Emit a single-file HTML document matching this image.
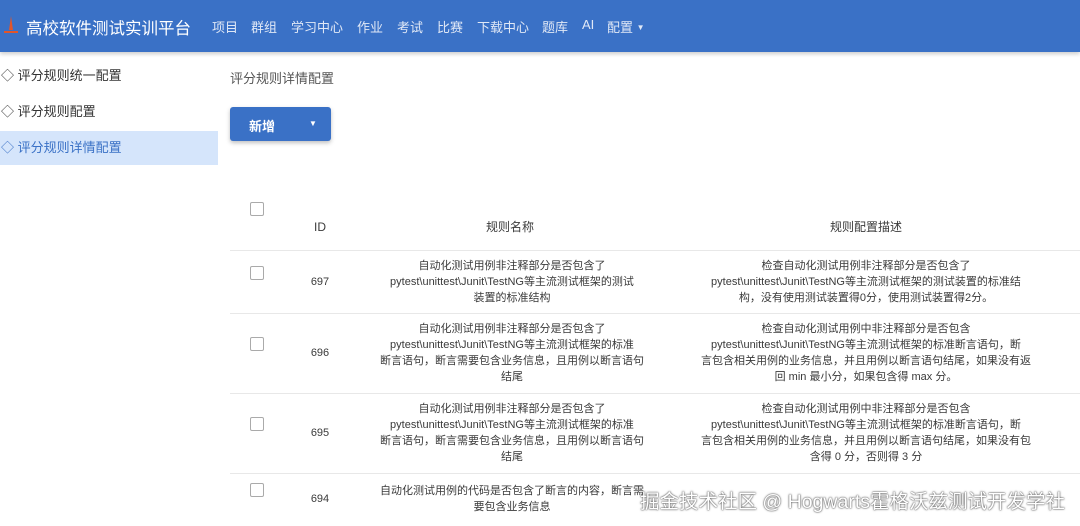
<!DOCTYPE html>
<html><head><meta charset="utf-8"><style>
*{margin:0;padding:0;box-sizing:border-box}
body{width:1080px;height:526px;overflow:hidden;background:#fff;font-family:"Liberation Sans","Noto Sans CJK SC",sans-serif;color:#333;position:relative}
.hd{position:absolute;left:0;top:0;width:1080px;height:52px;background:#3a71c6;box-shadow:0 2px 4px rgba(0,0,0,.2)}
.logo{position:absolute;left:26px;top:15px;font-size:16.5px;color:#fff}
.nav{position:absolute;left:212px;top:17px;font-size:13px;color:#e0e8f6;white-space:nowrap}
.nav span{position:absolute;top:0}
.side{position:absolute;left:0;font-size:13px;color:#333;height:34px;line-height:34px;width:218px;padding-left:1px}
.act{background:#d5e5fb;color:#3a71c6}
.a{position:absolute}
.btn{left:230px;top:107px;width:101px;height:34px;background:#3a71c6;border-radius:3px;box-shadow:0 2px 4px rgba(0,0,0,.25);color:#fff;font-size:13px;font-weight:bold}
.cb{position:absolute;left:250px;width:14px;height:14px;border:1px solid #aaa;border-radius:2px;background:#fff}
.c{position:absolute;font-size:11px;line-height:16px;text-align:center;color:#3a3a3a}
.line{position:absolute;left:230px;width:850px;height:1px;background:#e8e8e8}
.wm{position:absolute;left:640px;top:485px;font-size:19.5px;color:#fff;text-shadow:0 0 2px #555,0 0 1px #333;white-space:nowrap}
</style></head><body>
<div class="hd">
<svg class="a" style="left:3px;top:15px" width="16" height="20"><path d="M8 1 L10 15 L6 15 Z" fill="#e0552b"/><rect x="1" y="16" width="14" height="2" fill="#e0552b"/></svg>
<div class="logo">高校软件测试实训平台</div>
<div class="nav"><span style="left:0">项目</span><span style="left:39px">群组</span><span style="left:79px">学习中心</span><span style="left:145px">作业</span><span style="left:185px">考试</span><span style="left:225px">比赛</span><span style="left:265px">下载中心</span><span style="left:330px">题库</span><span style="left:370px">AI</span><span style="left:395px">配置 <span style="position:static;font-size:8px;vertical-align:2px">▼</span></span></div>
</div>
<div class="side" style="top:59px">◇ 评分规则统一配置</div>
<div class="side" style="top:95px">◇ 评分规则配置</div>
<div class="side act" style="top:131px">◇ 评分规则详情配置</div>
<div class="a" style="left:230px;top:68px;font-size:13px;color:#555">评分规则详情配置</div>
<div class="a btn"><span class="a" style="left:19px;top:9px">新增</span><span class="a" style="left:79px;top:12px;font-size:8px">▼</span></div>
<div class="cb" style="top:202px"></div>
<div class="c" style="left:300px;top:219px;width:40px;font-size:12px">ID</div>
<div class="c" style="left:410px;top:219px;width:200px;font-size:12px">规则名称</div>
<div class="c" style="left:766px;top:219px;width:200px;font-size:12px">规则配置描述</div>
<div class="line" style="top:250px"></div>
<div class="cb" style="top:266px"></div>
<div class="c" style="left:300px;top:274px;width:40px">697</div>
<div class="c" style="left:362px;top:258px;width:300px">自动化测试用例非注释部分是否包含了<br>pytest\unittest\Junit\TestNG等主流测试框架的测试<br>装置的标准结构</div>
<div class="c" style="left:676px;top:258px;width:380px">检查自动化测试用例非注释部分是否包含了<br>pytest\unittest\Junit\TestNG等主流测试框架的测试装置的标准结<br>构，没有使用测试装置得0分，使用测试装置得2分。</div>
<div class="line" style="top:313px"></div>
<div class="cb" style="top:337px"></div>
<div class="c" style="left:300px;top:345px;width:40px">696</div>
<div class="c" style="left:362px;top:321px;width:300px">自动化测试用例非注释部分是否包含了<br>pytest\unittest\Junit\TestNG等主流测试框架的标准<br>断言语句，断言需要包含业务信息，且用例以断言语句<br>结尾</div>
<div class="c" style="left:676px;top:321px;width:380px">检查自动化测试用例中非注释部分是否包含<br>pytest\unittest\Junit\TestNG等主流测试框架的标准断言语句，断<br>言包含相关用例的业务信息，并且用例以断言语句结尾，如果没有返<br>回 min 最小分，如果包含得 max 分。</div>
<div class="line" style="top:393px"></div>
<div class="cb" style="top:417px"></div>
<div class="c" style="left:300px;top:425px;width:40px">695</div>
<div class="c" style="left:362px;top:401px;width:300px">自动化测试用例非注释部分是否包含了<br>pytest\unittest\Junit\TestNG等主流测试框架的标准<br>断言语句，断言需要包含业务信息，且用例以断言语句<br>结尾</div>
<div class="c" style="left:676px;top:401px;width:380px">检查自动化测试用例中非注释部分是否包含<br>pytest\unittest\Junit\TestNG等主流测试框架的标准断言语句，断<br>言包含相关用例的业务信息，并且用例以断言语句结尾，如果没有包<br>含得 0 分，否则得 3 分</div>
<div class="line" style="top:473px"></div>
<div class="cb" style="top:483px"></div>
<div class="c" style="left:300px;top:491px;width:40px">694</div>
<div class="c" style="left:362px;top:483px;width:300px">自动化测试用例的代码是否包含了断言的内容，断言需<br>要包含业务信息</div>
<div class="wm">掘金技术社区 @ Hogwarts霍格沃兹测试开发学社</div>
</body></html>
